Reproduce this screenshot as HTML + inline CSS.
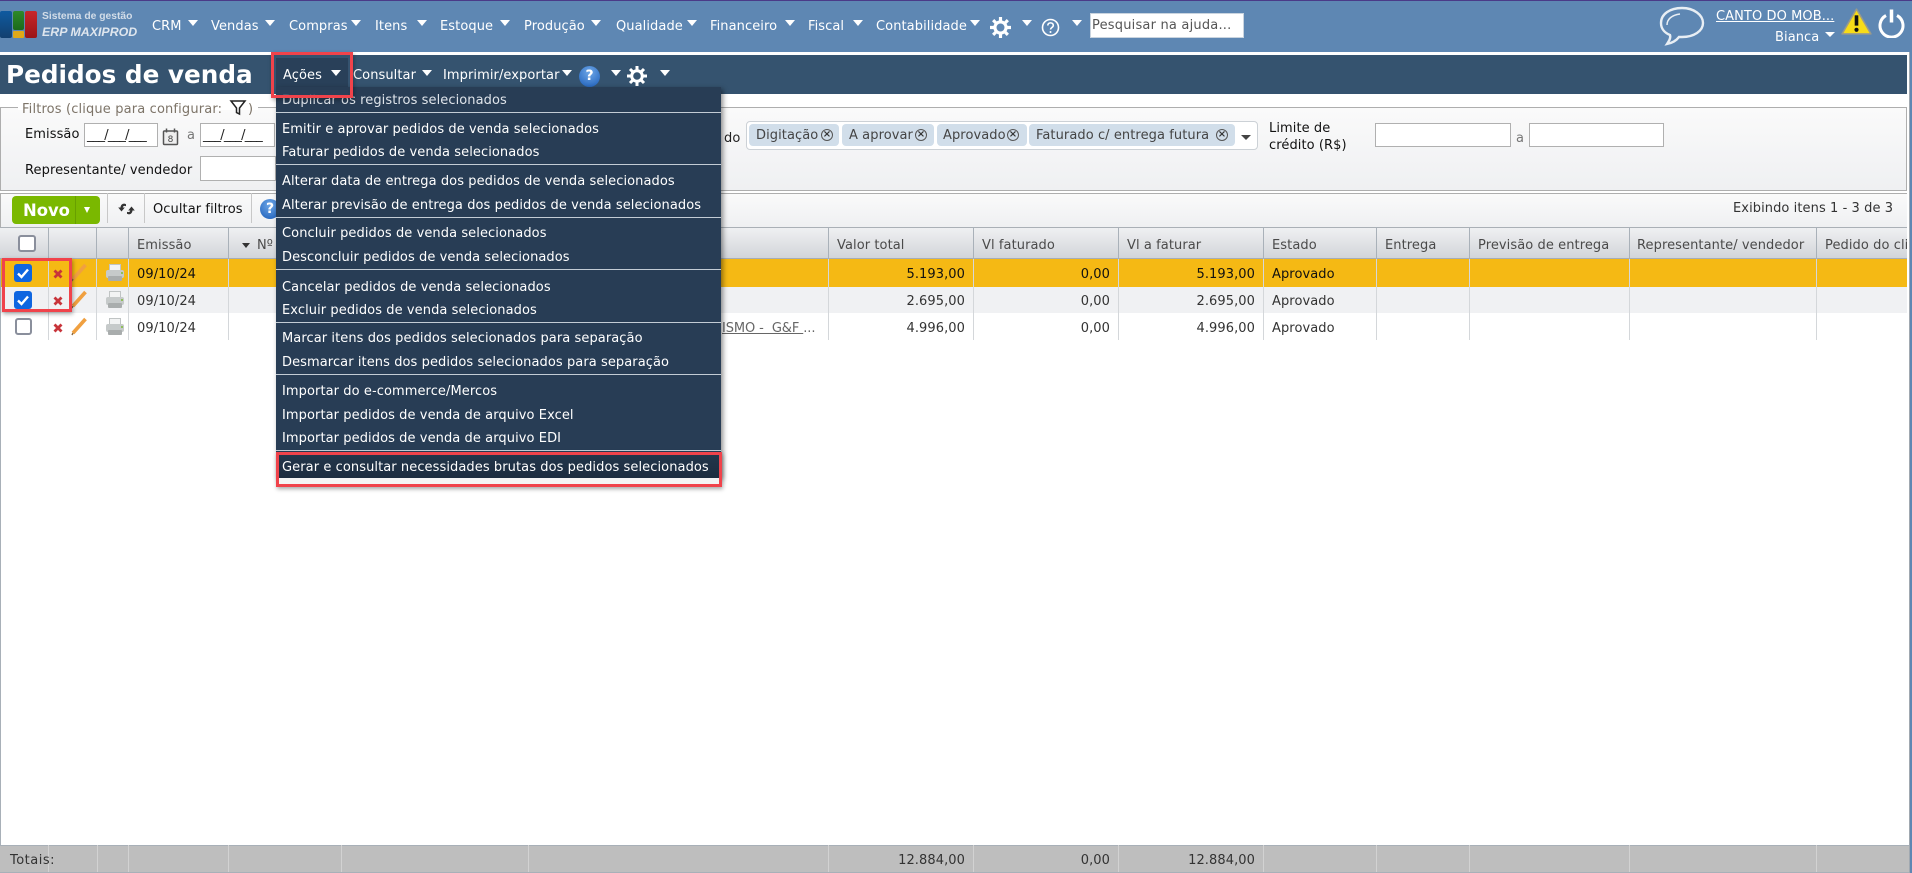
<!DOCTYPE html>
<html lang="pt"><head><meta charset="utf-8"><title>Pedidos de venda</title>
<style>
html,body{margin:0;padding:0;width:1912px;height:873px;overflow:hidden;background:#fff;font-family:"DejaVu Sans","Liberation Sans",sans-serif;font-size:13px;color:#333}
div,span,svg,i{position:absolute;display:block}
.t{white-space:pre;line-height:16px;height:16px;margin-top:1px;letter-spacing:.08px}
.w{color:#fff}
.ar{width:0;height:0;border-left:5.5px solid transparent;border-right:5.5px solid transparent;border-top:6px solid #fff}
.m{color:#fff;left:282px;font-size:13px;margin-top:2px}
.sep{left:276px;width:445px;height:1px;background:#c3ccd5}
.v{width:1px;background:#d4d7da}
.vh{width:1px;background:#a9b1b9;top:227px;height:32px}
.h{top:237px;color:#4a4a4a}
.r{text-align:right;width:100px}
.in{background:#fff;border:1px solid #b0b0b0;box-sizing:border-box}
.chip{background:#d1deea;border-radius:4px;top:124px;height:22px}
.x{width:12px;height:12px;border:1px solid #555;border-radius:50%;top:129px;box-sizing:border-box}
.x:after{content:"×";position:absolute;left:0;top:-2px;width:10px;text-align:center;font-size:10px;line-height:14px;color:#333;font-weight:bold}
.tot{top:845px;height:27px;width:1px;background:#d2d2d2}
</style></head><body>

<!-- top bar -->
<div style="left:0;top:0;width:1912px;height:873px;background:#5e87b3"></div>
<div style="left:0;top:0;width:1912px;height:1px;background:#4a3a88"></div>
<div style="left:0;top:52px;width:1909px;height:821px;background:#fff"></div>
<div style="left:1909px;top:52px;width:1px;height:821px;background:#a0a8b0"></div>

<!-- logo -->
<div style="left:0;top:11px;width:12px;height:27px;background:linear-gradient(#0f5aa0,#12406f);border-radius:2px"></div>
<div style="left:13px;top:11px;width:11px;height:19px;background:linear-gradient(#2f8a2a,#1c6a1c);border-radius:2px"></div>
<div style="left:13px;top:31px;width:11px;height:7px;background:#e0a818;border-radius:1px"></div>
<div style="left:25px;top:11px;width:12px;height:27px;background:linear-gradient(#c8262a,#9a1518);border-radius:2px"></div>
<span class="t" style="left:42px;top:8px;font:bold 10.3px/16px 'Liberation Sans',sans-serif;color:#d3dde8;letter-spacing:0">Sistema de gestão</span>
<span class="t" style="left:42px;top:23px;font:italic bold 12.4px/16px 'Liberation Sans',sans-serif;color:#dfe6ee;letter-spacing:0">ERP MAXIPROD</span>

<!-- nav -->
<span class="t w" style="left:152px;top:18px">CRM</span><i class="ar" style="left:188px;top:20px"></i>
<span class="t w" style="left:211px;top:18px">Vendas</span><i class="ar" style="left:265px;top:20px"></i>
<span class="t w" style="left:289px;top:18px">Compras</span><i class="ar" style="left:351px;top:20px"></i>
<span class="t w" style="left:375px;top:18px">Itens</span><i class="ar" style="left:417px;top:20px"></i>
<span class="t w" style="left:440px;top:18px">Estoque</span><i class="ar" style="left:500px;top:20px"></i>
<span class="t w" style="left:524px;top:18px">Produção</span><i class="ar" style="left:591px;top:20px"></i>
<span class="t w" style="left:616px;top:18px">Qualidade</span><i class="ar" style="left:687px;top:20px"></i>
<span class="t w" style="left:710px;top:18px">Financeiro</span><i class="ar" style="left:785px;top:20px"></i>
<span class="t w" style="left:808px;top:18px">Fiscal</span><i class="ar" style="left:853px;top:20px"></i>
<span class="t w" style="left:876px;top:18px">Contabilidade</span><i class="ar" style="left:970px;top:20px"></i>
<svg style="left:990px;top:17px" width="21" height="21" viewBox="0 0 20 20"><circle cx="10" cy="10" r="5.300" fill="none" stroke="#fff" stroke-width="3"/><path d="M10 0v4M10 16v4M0 10h4M16 10h4M3 3l2.800 2.800M14.200 14.200L17 17M17 3l-2.800 2.800M5.800 14.200L3 17" stroke="#fff" stroke-width="3"/></svg>
<i class="ar" style="left:1022px;top:20px"></i>
<svg style="left:1041px;top:18px" width="19" height="19" viewBox="0 0 19 19"><circle cx="9.500" cy="9.500" r="8" fill="none" stroke="#fff" stroke-width="1.600"/><path d="M6.800 7.500c0-3.500 5.500-3.500 5.500 0 0 2-2.800 2-2.800 4" fill="none" stroke="#fff" stroke-width="1.600"/><circle cx="9.500" cy="14" r="1" fill="#fff"/></svg>
<i class="ar" style="left:1072px;top:20px"></i>
<div style="left:1090px;top:13px;width:154px;height:25px;background:#fff;border:1px solid #c9d4df;box-sizing:border-box"></div>
<span class="t" style="left:1092px;top:17px;color:#555;letter-spacing:.2px">Pesquisar na ajuda...</span>

<!-- right top -->
<svg style="left:1658px;top:5px" width="48" height="43" viewBox="0 0 48 43"><path d="M24 3C12 3 3 9 3 18c0 6 4 10 9 12 1 3-1 6-3 9 5-1 9-3 12-7 1 0 2 0 3 0 12 0 21-6 21-14S36 3 24 3z" fill="none" stroke="#e8eef4" stroke-width="2.400"/><path d="M9 20c0-6 5-10 13-11" fill="none" stroke="#e8eef4" stroke-width="1.500"/></svg>
<span class="t w" style="left:1716px;top:8px;font-size:13px;text-decoration:underline">CANTO DO MOB...</span>
<span class="t w" style="left:1775px;top:29px">Bianca</span><i class="ar" style="left:1825px;top:32px;border-top-width:5px"></i>
<svg style="left:1840px;top:7px" width="33" height="29" viewBox="0 0 32 28"><path d="M16 2L30 26H2z" fill="#f7dc17" stroke="#9a9a8a" stroke-width="1.500" stroke-linejoin="round"/><path d="M16 8v10" stroke="#111" stroke-width="3.500"/><circle cx="16" cy="22" r="2" fill="#111"/></svg>
<svg style="left:1877px;top:8px" width="29" height="30" viewBox="0 0 29 30"><path d="M9 7.500a11.500 11.500 0 1 0 11 0" fill="none" stroke="#fff" stroke-width="3"/><path d="M14.500 1.500v13" stroke="#fff" stroke-width="3.500"/></svg>

<!-- title bar -->
<div style="left:0;top:55px;width:1907px;height:39px;background:#35536f"></div>
<span class="t w" style="left:6px;top:58px;font:bold 24.7px/32px 'DejaVu Sans',sans-serif;height:32px;letter-spacing:0">Pedidos de venda</span>
<div style="left:276px;top:58px;width:72px;height:30px;background:#294059"></div>
<span class="t w" style="left:283px;top:67px">Ações</span><i class="ar" style="left:331px;top:70px"></i>
<span class="t w" style="left:353px;top:67px">Consultar</span><i class="ar" style="left:422px;top:70px"></i>
<span class="t w" style="left:443px;top:67px">Imprimir/exportar</span><i class="ar" style="left:562px;top:70px"></i>
<div style="left:579px;top:66px;width:21px;height:21px;border-radius:50%;background:radial-gradient(circle at 50% 30%,#6fa8e8,#1a5cb8);color:#fff;font:bold 14px/21px 'DejaVu Sans',sans-serif;text-align:center">?</div>
<i class="ar" style="left:611px;top:70px"></i>
<svg style="left:627px;top:66px" width="20" height="20" viewBox="0 0 20 20"><circle cx="10" cy="10" r="5.300" fill="none" stroke="#fff" stroke-width="3"/><path d="M10 0v4M10 16v4M0 10h4M16 10h4M3 3l2.800 2.800M14.200 14.200L17 17M17 3l-2.800 2.800M5.800 14.200L3 17" stroke="#fff" stroke-width="3"/></svg>
<i class="ar" style="left:660px;top:70px"></i>

<!-- filters -->
<div style="left:0;top:107px;width:1907px;height:84px;box-sizing:border-box;border:1px solid #aeaeae;background:linear-gradient(#fafafa,#eff0f2)"></div>
<div style="left:18px;top:104px;width:240px;height:6px;background:#fff"></div>
<span class="t" style="left:22px;top:101px;color:#7d7468;letter-spacing:.15px">Filtros (clique para configurar:</span>
<svg style="left:229px;top:100px" width="18" height="16" viewBox="0 0 18 16"><path d="M2 1h14L10.500 8v6l-3-1.500V8z" fill="none" stroke="#222" stroke-width="1.500"/></svg>
<span class="t" style="left:248px;top:101px;color:#7d7468">)</span>
<span class="t" style="left:25px;top:126px;color:#111">Emissão</span>
<div class="in" style="left:84px;top:123px;width:74px;height:24px"></div>
<span class="t" style="left:87px;top:127px;color:#222;letter-spacing:-.75px">___/___/___</span>
<svg style="left:162px;top:128px" width="17" height="18" viewBox="0 0 17 18"><rect x="1.500" y="3" width="14" height="13.500" rx="1" fill="#eee" stroke="#555" stroke-width="1.500"/><path d="M4.500 0.500v4M12.500 0.500v4" stroke="#555" stroke-width="1.500"/><text x="8.500" y="14" font-size="9" text-anchor="middle" fill="#444" font-family="DejaVu Sans,sans-serif">8</text></svg>
<span class="t" style="left:187px;top:127px;color:#777">a</span>
<div class="in" style="left:200px;top:123px;width:75px;height:24px"></div>
<span class="t" style="left:203px;top:127px;color:#222;letter-spacing:-.75px">___/___/___</span>
<span class="t" style="left:25px;top:162px;color:#111">Representante/ vendedor</span>
<div class="in" style="left:200px;top:156px;width:76px;height:25px"></div>

<span class="t" style="left:724px;top:130px;color:#222">do</span>
<div style="left:746px;top:121px;width:512px;height:29px;background:#fff;border:1px solid #ccd1d6;border-radius:4px;box-sizing:border-box"></div>
<div class="chip" style="left:749px;width:90px"></div><span class="t" style="left:756px;top:127px;color:#444">Digitação</span><i class="x" style="left:821px"></i>
<div class="chip" style="left:842px;width:92px"></div><span class="t" style="left:849px;top:127px;color:#444">A aprovar</span><i class="x" style="left:915px"></i>
<div class="chip" style="left:937px;width:90px"></div><span class="t" style="left:943px;top:127px;color:#444">Aprovado</span><i class="x" style="left:1007px"></i>
<div class="chip" style="left:1029px;width:206px"></div><span class="t" style="left:1036px;top:127px;color:#444">Faturado c/ entrega futura</span><i class="x" style="left:1216px"></i>
<i class="ar" style="left:1241px;top:135px;border-top-color:#444;border-top-width:5px"></i>
<span class="t" style="left:1269px;top:120px;color:#111">Limite de</span>
<span class="t" style="left:1269px;top:137px;color:#111">crédito (R$)</span>
<div class="in" style="left:1375px;top:123px;width:136px;height:24px"></div>
<span class="t" style="left:1516px;top:130px;color:#777">a</span>
<div class="in" style="left:1529px;top:123px;width:135px;height:24px"></div>

<!-- toolbar -->
<div style="left:0;top:193px;width:1907px;height:34px;box-sizing:border-box;border-top:1px solid #aeaeae;border-left:1px solid #aeaeae;background:linear-gradient(#fafafa,#eff0f2)"></div>
<div style="left:12px;top:196px;width:88px;height:28px;background:#7ab800;border-radius:4px"></div>
<div style="left:75px;top:196px;width:1px;height:28px;background:#68a000"></div>
<span class="t w" style="left:23px;top:200px;font:bold 16.4px/20px 'DejaVu Sans',sans-serif;height:20px;letter-spacing:0">Novo</span>
<i class="ar" style="left:84px;top:207px;border-left-width:3.500px;border-right-width:3.500px;border-top-width:6px"></i>
<div style="left:107px;top:193px;width:1px;height:30px;background:#c8c8c8"></div>
<svg style="left:117px;top:201px" width="19" height="16" viewBox="0 0 19 16"><path d="M9 3.200C6.500 1.800 3.800 3.200 3.500 6.500L1.200 6.500 4.500 10.500 7.800 6.500 5.800 6.500C6 5 7.500 4.400 9 5.200z" fill="#333"/><path d="M10 12.800c2.500 1.400 5.200 0 5.500-3.300l2.300 0L14.500 5.500 11.200 9.500l2 0c-.2 1.500-1.700 2.100-3.200 1.300z" fill="#333"/></svg>
<div style="left:144px;top:193px;width:1px;height:30px;background:#c8c8c8"></div>
<span class="t" style="left:153px;top:201px;color:#111">Ocultar filtros</span>
<div style="left:251px;top:193px;width:1px;height:30px;background:#c8c8c8"></div>
<div style="left:260px;top:199px;width:20px;height:20px;border-radius:50%;background:radial-gradient(circle at 50% 30%,#6fa8e8,#1a5cb8);color:#fff;font:bold 14px/20px 'DejaVu Sans',sans-serif;text-align:center">?</div>
<span class="t" style="left:1733px;top:200px;color:#333">Exibindo itens 1 - 3 de 3</span>

<!-- table header -->
<div style="left:0;top:227px;width:1907px;height:32px;background:linear-gradient(#eff0f2,#d2d5d9);border-top:1px solid #aab0b6;border-bottom:1px solid #a6adb5;box-sizing:border-box"></div>
<i class="vh" style="left:48px"></i><i class="vh" style="left:96px"></i><i class="vh" style="left:128px"></i><i class="vh" style="left:228px"></i><i class="vh" style="left:341px"></i><i class="vh" style="left:528px"></i><i class="vh" style="left:828px"></i><i class="vh" style="left:973px"></i><i class="vh" style="left:1118px"></i><i class="vh" style="left:1263px"></i><i class="vh" style="left:1376px"></i><i class="vh" style="left:1469px"></i><i class="vh" style="left:1629px"></i><i class="vh" style="left:1816px"></i>
<div style="left:18px;top:235px;width:18px;height:17px;background:#fff;border:2px solid #8a8f9c;border-radius:3px;box-sizing:border-box"></div>
<span class="t h" style="left:137px">Emissão</span>
<i class="ar" style="left:242px;top:243px;border-top-color:#333;border-left-width:4.500px;border-right-width:4.500px;border-top-width:5px"></i>
<span class="t h" style="left:257px">Nº</span>
<span class="t h" style="left:837px">Valor total</span>
<span class="t h" style="left:982px">Vl faturado</span>
<span class="t h" style="left:1127px">Vl a faturar</span>
<span class="t h" style="left:1272px">Estado</span>
<span class="t h" style="left:1385px">Entrega</span>
<span class="t h" style="left:1478px">Previsão de entrega</span>
<span class="t h" style="left:1637px">Representante/ vendedor</span>
<div style="left:1825px;top:237px;width:82px;height:18px;overflow:hidden"><span class="t" style="left:0;top:0;color:#4a4a4a">Pedido do cliente</span></div>

<!-- rows -->
<div style="left:0;top:259px;width:1907px;height:28px;background:#f5b914"></div>
<div style="left:0;top:287px;width:1907px;height:26px;background:#f0f1f3"></div>
<div style="left:0;top:259px;width:1px;height:586px;background:#a8b0b8"></div>
<div style="left:1907px;top:94px;width:2px;height:779px;background:#fff"></div>
<i class="v" style="left:48px;top:259px;height:81px"></i><i class="v" style="left:96px;top:259px;height:81px"></i><i class="v" style="left:128px;top:259px;height:81px"></i><i class="v" style="left:228px;top:259px;height:81px"></i><i class="v" style="left:828px;top:259px;height:81px"></i><i class="v" style="left:973px;top:259px;height:81px"></i><i class="v" style="left:1118px;top:259px;height:81px"></i><i class="v" style="left:1263px;top:259px;height:81px"></i><i class="v" style="left:1376px;top:259px;height:81px"></i><i class="v" style="left:1469px;top:259px;height:81px"></i><i class="v" style="left:1629px;top:259px;height:81px"></i><i class="v" style="left:1816px;top:259px;height:81px"></i>

<svg style="left:14px;top:264px" width="18" height="18" viewBox="0 0 18 18"><rect width="18" height="18" rx="3" fill="#0f66e0"/><path d="M4 9.500l3.500 3.500L14 5.500" fill="none" stroke="#fff" stroke-width="2.400"/></svg>
<svg style="left:14px;top:291px" width="18" height="18" viewBox="0 0 18 18"><rect width="18" height="18" rx="3" fill="#0f66e0"/><path d="M4 9.500l3.500 3.500L14 5.500" fill="none" stroke="#fff" stroke-width="2.400"/></svg>
<div style="left:15px;top:318px;width:17px;height:17px;background:#fff;border:2px solid #8a8f9c;border-radius:3px;box-sizing:border-box"></div>

<svg style="left:53px;top:269px" width="10" height="10" viewBox="0 0 10 10"><path d="M1.500 1.500l7 7M8.500 1.500l-7 7" stroke="#c8343a" stroke-width="2.800"/></svg>
<svg style="left:53px;top:296px" width="10" height="10" viewBox="0 0 10 10"><path d="M1.500 1.500l7 7M8.500 1.500l-7 7" stroke="#c8343a" stroke-width="2.800"/></svg>
<svg style="left:53px;top:323px" width="10" height="10" viewBox="0 0 10 10"><path d="M1.500 1.500l7 7M8.500 1.500l-7 7" stroke="#c8343a" stroke-width="2.800"/></svg>
<svg style="left:70px;top:263px" width="18" height="20" viewBox="0 0 18 20"><path d="M15.500 2L3 16" stroke="#f0a040" stroke-width="3.600"/><path d="M2 18l1-2" stroke="#8a6a40" stroke-width="1.500"/></svg>
<svg style="left:70px;top:290px" width="18" height="20" viewBox="0 0 18 20"><path d="M15.500 2L3 16" stroke="#f0a040" stroke-width="3.600"/><path d="M2 18l1-2" stroke="#8a6a40" stroke-width="1.500"/></svg>
<svg style="left:70px;top:317px" width="18" height="20" viewBox="0 0 18 20"><path d="M15.500 2L3 16" stroke="#f0a040" stroke-width="3.600"/><path d="M2 18l1-2" stroke="#8a6a40" stroke-width="1.500"/></svg>
<svg style="left:105px;top:263px" width="20" height="20" viewBox="0 0 20 20"><rect x="4.500" y="1.500" width="11" height="6" fill="#f2f3f3" stroke="#c0c4c4"/><rect x="1" y="7" width="18" height="8" rx="2" fill="#c6caca"/><rect x="3" y="13" width="14" height="5" rx="1" fill="#a9adad"/><rect x="16" y="9" width="2" height="2" fill="#8fbf5a"/></svg>
<svg style="left:105px;top:290px" width="20" height="20" viewBox="0 0 20 20"><rect x="4.500" y="1.500" width="11" height="6" fill="#f2f3f3" stroke="#c0c4c4"/><rect x="1" y="7" width="18" height="8" rx="2" fill="#c6caca"/><rect x="3" y="13" width="14" height="5" rx="1" fill="#a9adad"/><rect x="16" y="9" width="2" height="2" fill="#8fbf5a"/></svg>
<svg style="left:105px;top:317px" width="20" height="20" viewBox="0 0 20 20"><rect x="4.500" y="1.500" width="11" height="6" fill="#f2f3f3" stroke="#c0c4c4"/><rect x="1" y="7" width="18" height="8" rx="2" fill="#c6caca"/><rect x="3" y="13" width="14" height="5" rx="1" fill="#a9adad"/><rect x="16" y="9" width="2" height="2" fill="#8fbf5a"/></svg>

<span class="t" style="left:137px;top:266px;color:#111">09/10/24</span>
<span class="t" style="left:137px;top:293px;color:#333">09/10/24</span>
<span class="t" style="left:137px;top:320px;color:#333">09/10/24</span>

<span class="t r" style="left:865px;top:266px;color:#111">5.193,00</span><span class="t r" style="left:1010px;top:266px;color:#111">0,00</span><span class="t r" style="left:1155px;top:266px;color:#111">5.193,00</span><span class="t" style="left:1272px;top:266px;color:#111">Aprovado</span>
<span class="t r" style="left:865px;top:293px">2.695,00</span><span class="t r" style="left:1010px;top:293px">0,00</span><span class="t r" style="left:1155px;top:293px">2.695,00</span><span class="t" style="left:1272px;top:293px">Aprovado</span>
<span class="t r" style="left:865px;top:320px">4.996,00</span><span class="t r" style="left:1010px;top:320px">0,00</span><span class="t r" style="left:1155px;top:320px">4.996,00</span><span class="t" style="left:1272px;top:320px">Aprovado</span>
<span class="t" style="left:722px;top:320px;color:#666;letter-spacing:-.1px"><u>ISMO -  G&amp;F </u>...</span>

<!-- totals -->
<div style="left:0;top:845px;width:1909px;height:28px;background:#bebebe;border-top:1px solid #a8b0b8;border-bottom:1px solid #a8b0b8;box-sizing:border-box"></div>
<i class="tot" style="left:48px"></i><i class="tot" style="left:97px"></i><i class="tot" style="left:128px"></i><i class="tot" style="left:228px"></i><i class="tot" style="left:341px"></i><i class="tot" style="left:528px"></i><i class="tot" style="left:828px"></i><i class="tot" style="left:973px"></i><i class="tot" style="left:1118px"></i><i class="tot" style="left:1263px"></i><i class="tot" style="left:1376px"></i><i class="tot" style="left:1469px"></i><i class="tot" style="left:1629px"></i><i class="tot" style="left:1816px"></i>
<span class="t" style="left:10px;top:852px;color:#333;letter-spacing:.5px">Totais:</span>
<span class="t r" style="left:865px;top:852px">12.884,00</span><span class="t r" style="left:1010px;top:852px">0,00</span><span class="t r" style="left:1155px;top:852px">12.884,00</span>

<!-- red box checkboxes -->
<div style="left:2px;top:258px;width:70px;height:54px;border:3px solid #f0434b;box-sizing:border-box;box-shadow:1px 2px 4px rgba(0,0,0,.35)"></div>

<!-- dropdown -->
<div style="left:276px;top:87px;width:445px;height:391px;background:#283d55;box-shadow:2px 2px 5px rgba(0,0,0,.45)"></div>
<span class="t m" style="top:91px;color:#dfe4ea">Duplicar os registros selecionados</span>
<i class="sep" style="top:112px"></i>
<span class="t m" style="top:120px">Emitir e aprovar pedidos de venda selecionados</span>
<span class="t m" style="top:143px">Faturar pedidos de venda selecionados</span>
<i class="sep" style="top:164px"></i>
<span class="t m" style="top:172px">Alterar data de entrega dos pedidos de venda selecionados</span>
<span class="t m" style="top:196px">Alterar previsão de entrega dos pedidos de venda selecionados</span>
<i class="sep" style="top:217px"></i>
<span class="t m" style="top:224px">Concluir pedidos de venda selecionados</span>
<span class="t m" style="top:248px">Desconcluir pedidos de venda selecionados</span>
<i class="sep" style="top:269px"></i>
<span class="t m" style="top:278px">Cancelar pedidos de venda selecionados</span>
<span class="t m" style="top:301px">Excluir pedidos de venda selecionados</span>
<i class="sep" style="top:322px"></i>
<span class="t m" style="top:329px">Marcar itens dos pedidos selecionados para separação</span>
<span class="t m" style="top:353px">Desmarcar itens dos pedidos selecionados para separação</span>
<i class="sep" style="top:374px"></i>
<span class="t m" style="top:382px">Importar do e-commerce/Mercos</span>
<span class="t m" style="top:406px">Importar pedidos de venda de arquivo Excel</span>
<span class="t m" style="top:429px">Importar pedidos de venda de arquivo EDI</span>
<i class="sep" style="top:450px"></i>
<div style="left:276px;top:454px;width:445px;height:24px;background:linear-gradient(#23364b,#1d2d40)"></div>
<span class="t m" style="top:458px">Gerar e consultar necessidades brutas dos pedidos selecionados</span>
<div style="left:276px;top:478px;width:445px;height:7px;background:#f4f4f4"></div>
<div style="left:276px;top:452px;width:446px;height:35px;border:3px solid #f0434b;box-sizing:border-box;box-shadow:1px 2px 4px rgba(0,0,0,.35)"></div>

<!-- red box acoes -->
<div style="left:271px;top:52px;width:82px;height:46px;border:3px solid #f0434b;box-sizing:border-box;box-shadow:1px 2px 4px rgba(0,0,0,.3)"></div>
<div style="left:276px;top:90px;width:72px;height:5px;background:#294059;opacity:.85"></div>
</body></html>
